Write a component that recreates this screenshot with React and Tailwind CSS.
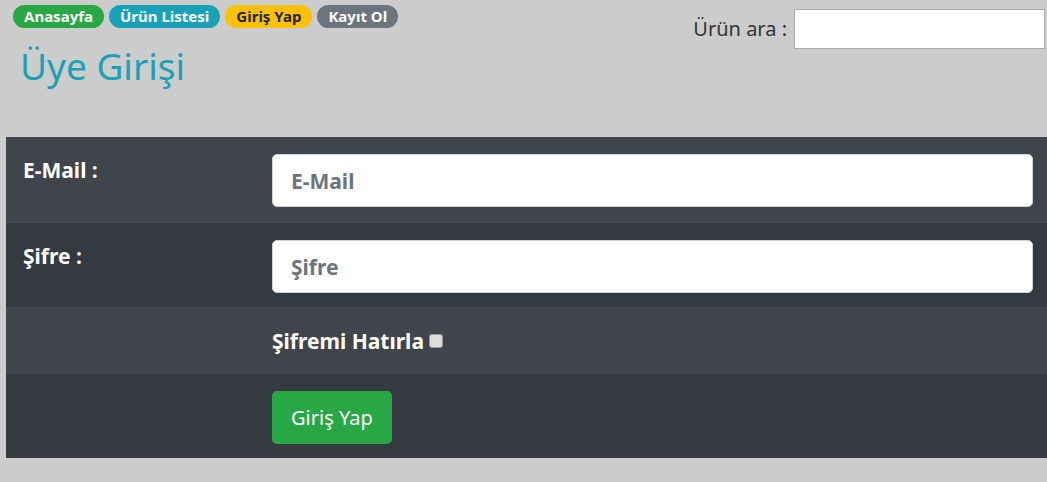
export default function App() {
  const font = { fontFamily: '"Noto Sans", "Open Sans", sans-serif' };
  return (
    <div className="h-[482px] w-full overflow-hidden bg-[#cccccc]" style={font}>
      {/* Header */}
      <div className="flex h-[137px] justify-between">
        <div className="pl-[13px] pt-[5px]">
          <div className="flex gap-[5px]">
            <span className="flex h-[23px] items-center rounded-full bg-[#28a745] px-[11px] text-[15px] font-bold text-white">Anasayfa</span>
            <span className="flex h-[23px] items-center rounded-full bg-[#17a2b8] px-[11px] text-[15px] font-bold text-white">Ürün Listesi</span>
            <span className="flex h-[23px] items-center rounded-full bg-[#ffc107] px-[11px] text-[15px] font-bold text-[#212529]">Giriş Yap</span>
            <span className="flex h-[23px] items-center rounded-full bg-[#6c757d] px-[11px] text-[15px] font-bold text-white">Kayıt Ol</span>
          </div>
          <h1 className="mt-[14px] pl-[7px] text-[37px] leading-[48px] text-[#17a2b8]">Üye Girişi</h1>
        </div>
        <div className="flex items-start pr-[2px] pt-[9px]">
          <label className="mr-[7px] mt-[6px] text-[20px] leading-[28px] text-[#333]">Ürün ara :</label>
          <input type="text" className="h-[40px] w-[251px] border border-[#aaa] bg-white outline-none" />
        </div>
      </div>

      {/* Form table */}
      <div className="ml-[6px] w-[1041px] text-white">
        <div className="grid h-[85px] grid-cols-[249px_1fr] bg-[#40444b]">
          <div className="p-[17px] text-[21px] font-bold leading-[32px]">E-Mail :</div>
          <div className="py-[17px] pl-[17px] pr-[14px]">
            <input
              type="text"
              placeholder="E-Mail"
              className="h-[53px] w-full rounded-[5px] border border-[#ced4da] bg-white px-[18px] text-[21px] font-bold text-[#495057] outline-none placeholder:text-[#6c757d]"
            />
          </div>
        </div>
        <div className="grid h-[85px] grid-cols-[249px_1fr] border-t border-[#474c54] bg-[#353940]">
          <div className="p-[17px] text-[21px] font-bold leading-[32px]">Şifre :</div>
          <div className="py-[17px] pl-[17px] pr-[14px]">
            <input
              type="password"
              placeholder="Şifre"
              className="h-[53px] w-full rounded-[5px] border border-[#ced4da] bg-white px-[18px] text-[21px] font-bold text-[#495057] outline-none placeholder:text-[#6c757d]"
            />
          </div>
        </div>
        <div className="grid h-[66px] grid-cols-[249px_1fr] border-t border-[#474c54] bg-[#40444b]">
          <div />
          <div className="flex items-center px-[17px] text-[21px] font-bold leading-[32px]">
            Şifremi Hatırla
            <input
              type="checkbox"
              className="ml-[5px] h-[14px] w-[14px] appearance-none rounded-[3px] border border-[#9a9a9a] bg-[#dcdcdc]"
            />
          </div>
        </div>
        <div className="grid h-[85px] grid-cols-[249px_1fr] border-t border-[#474c54] bg-[#353940]">
          <div />
          <div className="p-[17px]">
            <button className="h-[53px] rounded-[5px] bg-[#28a745] px-[19px] text-[20px] text-white">Giriş Yap</button>
          </div>
        </div>
      </div>
    </div>
  );
}
